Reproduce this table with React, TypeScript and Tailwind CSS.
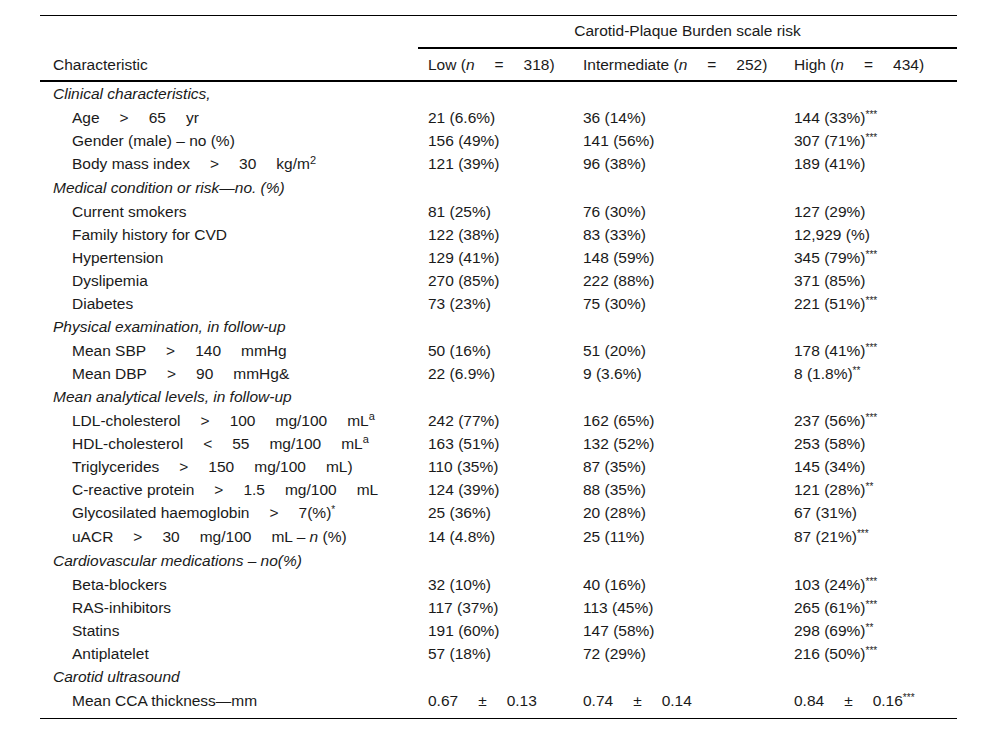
import React from 'react';

const Sp = () => <span className="inline-block w-[20px]" />;

const Star = ({ s }: { s: string }) => <sup className="text-[10px]">{s}</sup>;

type GroupRow = { kind: 'group'; label: string };
type DataRow = {
  kind: 'data';
  label: React.ReactNode;
  low: React.ReactNode;
  mid: React.ReactNode;
  high: React.ReactNode;
  tall?: 'h-[24px]' | 'h-[25px]';
};
type Row = GroupRow | DataRow;

const pm = (a: string, b: string, stars?: string) => (
  <>
    {a}
    <Sp />±<Sp />
    {b}
    {stars && <Star s={stars} />}
  </>
);

const v = (text: string, stars?: string) => (
  <>
    {text}
    {stars && <Star s={stars} />}
  </>
);

const rows: Row[] = [
  { kind: 'group', label: 'Clinical characteristics,' },
  { kind: 'data', label: <>Age<Sp />&gt;<Sp />65<Sp />yr</>, low: v('21 (6.6%)'), mid: v('36 (14%)'), high: v('144 (33%)', '***') },
  { kind: 'data', label: 'Gender (male) – no (%)', low: v('156 (49%)'), mid: v('141 (56%)'), high: v('307 (71%)', '***') },
  {
    kind: 'data',
    label: <>Body mass index<Sp />&gt;<Sp />30<Sp />kg/m<sup className="text-[11px]">2</sup></>,
    low: v('121 (39%)'), mid: v('96 (38%)'), high: v('189 (41%)'), tall: 'h-[24px]',
  },
  { kind: 'group', label: 'Medical condition or risk—no. (%)' },
  { kind: 'data', label: 'Current smokers', low: v('81 (25%)'), mid: v('76 (30%)'), high: v('127 (29%)') },
  { kind: 'data', label: 'Family history for CVD', low: v('122 (38%)'), mid: v('83 (33%)'), high: v('12,929 (%)') },
  { kind: 'data', label: 'Hypertension', low: v('129 (41%)'), mid: v('148 (59%)'), high: v('345 (79%)', '***') },
  { kind: 'data', label: 'Dyslipemia', low: v('270 (85%)'), mid: v('222 (88%)'), high: v('371 (85%)') },
  { kind: 'data', label: 'Diabetes', low: v('73 (23%)'), mid: v('75 (30%)'), high: v('221 (51%)', '***') },
  { kind: 'group', label: 'Physical examination, in follow-up' },
  { kind: 'data', label: <>Mean SBP<Sp />&gt;<Sp />140<Sp />mmHg</>, low: v('50 (16%)'), mid: v('51 (20%)'), high: v('178 (41%)', '***') },
  { kind: 'data', label: <>Mean DBP<Sp />&gt;<Sp />90<Sp />mmHg&amp;</>, low: v('22 (6.9%)'), mid: v('9 (3.6%)'), high: v('8 (1.8%)', '**') },
  { kind: 'group', label: 'Mean analytical levels, in follow-up' },
  {
    kind: 'data',
    label: <>LDL-cholesterol<Sp />&gt;<Sp />100<Sp />mg/100<Sp />mL<sup className="text-[11px]">a</sup></>,
    low: v('242 (77%)'), mid: v('162 (65%)'), high: v('237 (56%)', '***'),
  },
  {
    kind: 'data',
    label: <>HDL-cholesterol<Sp />&lt;<Sp />55<Sp />mg/100<Sp />mL<sup className="text-[11px]">a</sup></>,
    low: v('163 (51%)'), mid: v('132 (52%)'), high: v('253 (58%)'),
  },
  { kind: 'data', label: <>Triglycerides<Sp />&gt;<Sp />150<Sp />mg/100<Sp />mL)</>, low: v('110 (35%)'), mid: v('87 (35%)'), high: v('145 (34%)') },
  { kind: 'data', label: <>C-reactive protein<Sp />&gt;<Sp />1.5<Sp />mg/100<Sp />mL</>, low: v('124 (39%)'), mid: v('88 (35%)'), high: v('121 (28%)', '**') },
  { kind: 'data', label: <>Glycosilated haemoglobin<Sp />&gt;<Sp />7(%)<Star s="*" /></>, low: v('25 (36%)'), mid: v('20 (28%)'), high: v('67 (31%)') },
  {
    kind: 'data',
    label: <>uACR<Sp />&gt;<Sp />30<Sp />mg/100<Sp />mL – <i>n</i> (%)</>,
    low: v('14 (4.8%)'), mid: v('25 (11%)'), high: v('87 (21%)', '***'), tall: 'h-[25px]',
  },
  { kind: 'group', label: 'Cardiovascular medications – no(%)' },
  { kind: 'data', label: 'Beta-blockers', low: v('32 (10%)'), mid: v('40 (16%)'), high: v('103 (24%)', '***') },
  { kind: 'data', label: 'RAS-inhibitors', low: v('117 (37%)'), mid: v('113 (45%)'), high: v('265 (61%)', '***') },
  { kind: 'data', label: 'Statins', low: v('191 (60%)'), mid: v('147 (58%)'), high: v('298 (69%)', '**') },
  { kind: 'data', label: 'Antiplatelet', low: v('57 (18%)'), mid: v('72 (29%)'), high: v('216 (50%)', '***') },
  { kind: 'group', label: 'Carotid ultrasound' },
  { kind: 'data', label: 'Mean CCA thickness—mm', low: pm('0.67', '0.13'), mid: pm('0.74', '0.14'), high: pm('0.84', '0.16', '***') },
];

const cols = 'grid grid-cols-[378px_155px_211px_173px] items-center';

export default function App() {
  return (
    <div className="min-h-[734px] bg-white pt-[15px] pl-[40px] font-['Liberation_Sans',Arial,sans-serif] text-[15.5px] leading-[18px] text-[#1a1a1a]">
      <div className="w-[917px] border-t border-black">
        {/* header */}
        <div className="grid grid-cols-[378px_539px]">
          <div />
          <div className="flex h-[33px] items-center justify-center border-b-2 border-black pb-[2px]">
            Carotid-Plaque Burden scale risk
          </div>
        </div>
        <div className={`${cols} h-[33px] border-b-2 border-black`}>
          <div className="pl-[13px]">Characteristic</div>
          <div className="pl-[10px]">
            Low (<i>n</i>
            <Sp />=<Sp />
            318)
          </div>
          <div className="pl-[10px]">
            Intermediate (<i>n</i>
            <Sp />=<Sp />
            252)
          </div>
          <div className="pl-[10px]">
            High (<i>n</i>
            <Sp />=<Sp />
            434)
          </div>
        </div>

        {/* body */}
        <div className="border-b border-black pb-[6px]">
          {rows.map((r, i) =>
            r.kind === 'group' ? (
              <div key={i} className="flex h-[24px] items-center pl-[13px] italic">
                {r.label}
              </div>
            ) : (
              <div key={i} className={`${cols} ${r.tall ?? 'h-[23px]'}`}>
                <div className="whitespace-nowrap pl-[32px]">{r.label}</div>
                <div className="whitespace-nowrap pl-[10px]">{r.low}</div>
                <div className="whitespace-nowrap pl-[10px]">{r.mid}</div>
                <div className="whitespace-nowrap pl-[10px]">{r.high}</div>
              </div>
            )
          )}
        </div>
      </div>
    </div>
  );
}
